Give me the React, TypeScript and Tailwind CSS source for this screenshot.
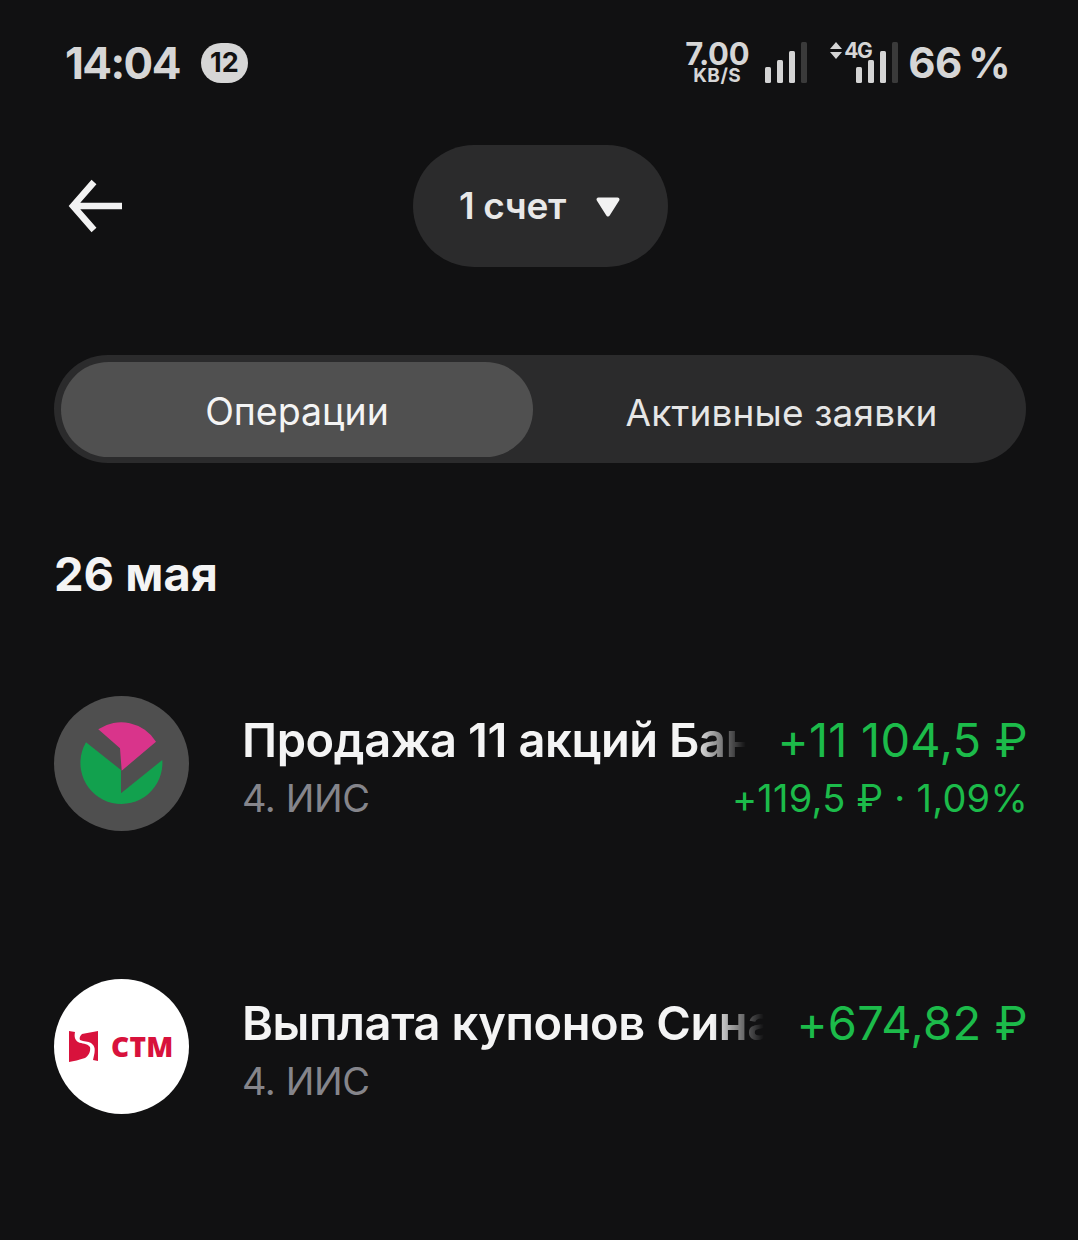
const SignalBars = () => (
  <svg width="44" height="42" viewBox="0 0 44 42">
    <rect x="0" y="25" width="6" height="16" rx="1.5" fill="#d4d4d4" />
    <rect x="12" y="18" width="6" height="23" rx="1.5" fill="#d4d4d4" />
    <rect x="24" y="9" width="6" height="32" rx="1.5" fill="#d4d4d4" />
    <rect x="36" y="0" width="6" height="41" rx="1.5" fill="#3a3a3a" />
  </svg>
);

const StatusBar = () => (
  <div className="flex h-[125px] items-center justify-between pl-[65px] pr-[68px] text-[#d6d6d6]">
    <div className="flex items-center gap-[21px]">
      <span className="text-[44px] font-bold leading-none tracking-[-1.6px]">14:04</span>
      <span className="flex h-[40px] w-[47px] items-center justify-center rounded-full bg-[#d6d6d6] text-[27px] font-bold leading-none text-[#111112]">
        12
      </span>
    </div>
    <div className="flex items-center">
      <div className="flex w-[64px] flex-col items-center font-bold leading-none">
        <span className="text-[31px] leading-[26px] tracking-[-0.3px]">7.00</span>
        <span className="text-[19px] leading-[18px] tracking-[0.5px]">KB/S</span>
      </div>
      <div className="ml-[16px]">
        <SignalBars />
      </div>
      <div className="relative ml-[19px] flex h-[42px] w-[72px] justify-end">
        <svg className="absolute left-0 top-0" width="16" height="18" viewBox="0 0 16 18">
          <path d="M8 0L14 7H2Z M8 17L2 10H14Z" fill="#d4d4d4" />
        </svg>
        <span className="absolute left-[16px] top-[-2px] text-[21px] font-bold leading-none tracking-[-1.5px]">4G</span>
        <SignalBars />
      </div>
      <span className="ml-[8px] text-[42px] font-bold leading-none tracking-[-0.6px] [word-spacing:-3px]">66 %</span>
    </div>
  </div>
);

const Header = () => (
  <div className="relative flex h-[122px] items-center justify-center pl-[2px]">
    <svg className="absolute left-[66px] top-[33px]" width="58" height="56" viewBox="0 0 58 56">
      <path d="M56 28H9M28 4L7 28L28 52" fill="none" stroke="#f2f2f2" strokeWidth="6.5" />
    </svg>
    <div className="flex h-[122px] w-[255px] items-center justify-center gap-[29px] rounded-full bg-[#2b2b2c] text-[37px] font-semibold tracking-[-0.3px] text-[#e8e8e8]">
      <span>1 счет</span>
      <svg className="mt-[2px]" width="26" height="22" viewBox="0 0 26 22">
        <path d="M3.5 3.5H22.5L13 18.5Z" fill="#f2f2f2" stroke="#f2f2f2" strokeWidth="4" strokeLinejoin="round" />
      </svg>
    </div>
  </div>
);

const Tabs = () => (
  <div className="ml-[54px] mt-[88px] flex h-[108px] w-[972px] rounded-full bg-[#2b2b2c] p-[7px]">
    <div className="flex h-[95px] w-[472px] items-center justify-center rounded-full bg-[#505050] pt-[6px] text-[37.5px] text-[#f4f4f4]">
      Операции
    </div>
    <div className="flex h-[95px] flex-1 items-center justify-center pl-[11px] pt-[6px] text-[37px] tracking-[0.15px] text-[#e6e6e6]">
      Активные заявки
    </div>
  </div>
);

const BankLogo = () => (
  <svg width="135" height="135" viewBox="0 0 135 135">
    <circle cx="67.5" cy="67.5" r="67.5" fill="#4f4f4f" />
    <path d="M44.3 33.3A41 41 0 0 1 102 45.7L67.7 74.7L66 52.3Z" fill="#d9348b" />
    <path d="M32 46.3L67 74V97.3L108.3 64A41 41 0 1 1 32 46.3Z" fill="#12a14e" />
  </svg>
);

const StmLogo = () => (
  <div className="flex h-[135px] w-[135px] items-center rounded-full bg-white pl-[15px]">
    <svg width="30" height="31" viewBox="0 0 30 31">
      <path
        d="M0 0L6 1C5 6 6 9 9 11C13 13 18 12 21 16C22 21 19 25 16 27C10 29 5 30 0 31Z"
        fill="#d8123c"
      />
      <path
        d="M29 0C24 1 18 2 13 3C11 5 10 7 11 9C15 11 19 10 22 12C26 15 26 18 25.5 22L24 29L29 30Z"
        fill="#d8123c"
      />
    </svg>
    <span className="ml-[12px] mt-[-2px] font-['Open_Sans',sans-serif] text-[28px] font-extrabold leading-none tracking-[0.3px] text-[#d8123c]">
      СТМ
    </span>
  </div>
);

interface RowProps {
  logo: React.ReactNode;
  title: string;
  amount: string;
  profit?: string;
  className?: string;
}

const OperationRow = ({ logo, title, amount, profit, className }: RowProps) => (
  <div className={`ml-[54px] flex h-[135px] w-[972px] ${className ?? ""}`}>
    <div className="shrink-0">{logo}</div>
    <div className="ml-[53px] mr-[-2px] min-w-0 flex-1 pt-[16px]">
      <div className="flex items-center justify-between">
        <div className="min-w-0 flex-1 overflow-hidden whitespace-nowrap text-[47px] font-semibold leading-[56px] tracking-[-0.4px] text-[#f4f4f4] [mask-image:linear-gradient(to_right,black_calc(100%-60px),transparent_calc(100%-8px))]">
          {title}
        </div>
        <div className="shrink-0 pl-[24px] text-[47px] leading-[56px] tracking-[0.25px] text-[#1cbb4a]">{amount}</div>
      </div>
      <div className="mt-[3px] flex items-center justify-between text-[38px] leading-[54px]">
        <span className="tracking-[-0.4px] text-[#85858b]">4. ИИС</span>
        {profit && <span className="tracking-[0.25px] text-[#1cbb4a]">{profit}</span>}
      </div>
    </div>
  </div>
);

export default function App() {
  return (
    <div className="h-[1240px] w-[1078px] overflow-hidden bg-[#111112] font-['Inter',sans-serif]">
      <StatusBar />
      <div className="mt-[20px]">
        <Header />
      </div>
      <Tabs />
      <h2 className="ml-[54px] mt-[82px] text-[47px] font-bold leading-[58px] text-[#f4f4f4]">26 мая</h2>
      <OperationRow
        className="mt-[93px]"
        logo={<BankLogo />}
        title="Продажа 11 акций Банк Санкт-Петербург"
        amount="+11 104,5 ₽"
        profit="+119,5 ₽ · 1,09%"
      />
      <OperationRow
        className="mt-[148px]"
        logo={<StmLogo />}
        title="Выплата купонов Синара"
        amount="+674,82 ₽"
      />
    </div>
  );
}
